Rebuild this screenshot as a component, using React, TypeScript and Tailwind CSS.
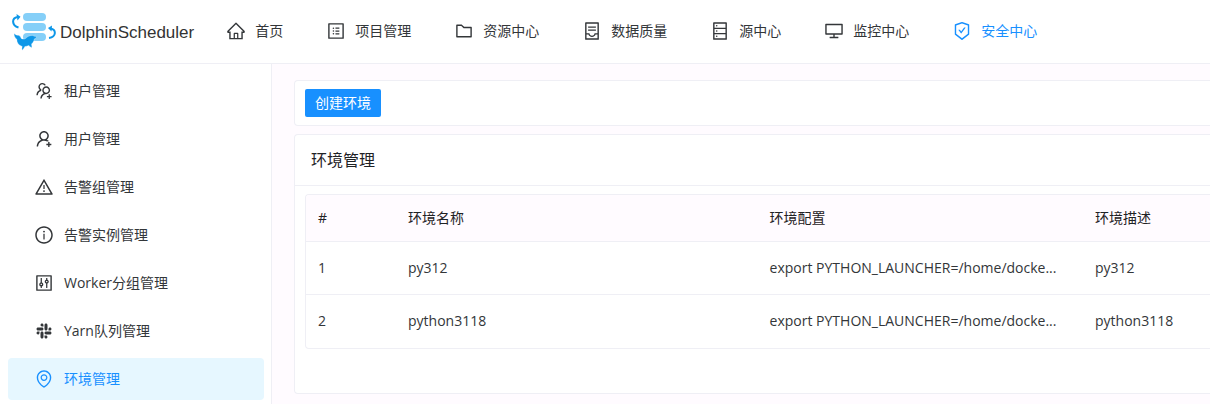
import {
  AiOutlineContainer,
  AiOutlineControl,
  AiOutlineDatabase,
  AiOutlineDesktop,
  AiOutlineEnvironment,
  AiOutlineFolder,
  AiOutlineHome,
  AiOutlineInfoCircle,
  AiOutlineProfile,
  AiOutlineSafetyCertificate,
  AiOutlineSlack,
  AiOutlineUserAdd,
  AiOutlineUsergroupAdd,
  AiOutlineWarning,
} from 'react-icons/ai'

const navItems = [
  { label: '首页', icon: AiOutlineHome },
  { label: '项目管理', icon: AiOutlineProfile },
  { label: '资源中心', icon: AiOutlineFolder },
  { label: '数据质量', icon: AiOutlineContainer },
  { label: '源中心', icon: AiOutlineDatabase },
  { label: '监控中心', icon: AiOutlineDesktop },
  { label: '安全中心', icon: AiOutlineSafetyCertificate, active: true },
]

const sideItems = [
  { label: '租户管理', icon: AiOutlineUsergroupAdd },
  { label: '用户管理', icon: AiOutlineUserAdd },
  { label: '告警组管理', icon: AiOutlineWarning },
  { label: '告警实例管理', icon: AiOutlineInfoCircle },
  { label: 'Worker分组管理', icon: AiOutlineControl },
  { label: 'Yarn队列管理', icon: AiOutlineSlack },
  { label: '环境管理', icon: AiOutlineEnvironment, active: true },
]

const environments = [
  { name: 'py312', config: 'export PYTHON_LAUNCHER=/home/docke...', description: 'py312' },
  { name: 'python3118', config: 'export PYTHON_LAUNCHER=/home/docke...', description: 'python3118' },
]

function Logo() {
  return (
    <a href="#" className="flex items-center gap-1 shrink-0 text-[17px] text-[#333333] font-['Liberation_Sans',sans-serif]">
      <svg className="w-11 h-10" viewBox="0 0 44 40" aria-hidden="true">
        {/* Task bars */}
        <g fill="#85cff8">
          <rect x="11" y="1" width="23" height="8" rx="4" />
          <rect x="11" y="11" width="23" height="8" rx="4" />
          <rect x="11" y="21" width="23" height="8" rx="4" />
        </g>
        {/* Arrows */}
        <g fill="none" stroke="#0d97e8" strokeWidth="2">
          <path d="M6.5 15.5C-0.5 13.5 -0.5 6 5.5 5" />
          <path d="M37 26C44.5 25 44.5 17.5 38.5 16.5" />
        </g>
        <path d="M4.5 2L8.5 4.8L5.5 8.5Z" fill="#0d97e8" />
        <path d="M40 13.5L36 16L39.5 19.5Z" fill="#0d97e8" />
        {/* Dolphin */}
        <path
          d="M2 21.500C3.500 22.800 5 23.300 6.200 23.300C7.500 23.600 8.800 24.500 9 26.200C10.500 27.300 12 27.400 13.500 26.500C15.500 24.500 18 23.300 20.500 23.500C21.200 23.600 21.800 23.900 22 24.200C23.500 24.200 24.600 24.600 24.500 25.300C24.300 26 23 26.400 22.200 27.200C22 29 21 30.800 19.500 32L20 35.500C18.500 35 17.300 34.200 16.800 33.400C15.300 34 13.800 34.400 12.800 34.600C12.300 36 11.300 37.400 10 38.200C9.800 36.800 9.900 35.500 10.200 34.400C6.500 33.300 4.700 30.500 4.800 27.200C3.200 26.200 2 24 2 21.500Z"
          fill="#0d97e8"
          stroke="#ffffff"
          strokeWidth="0.3"
        />
      </svg>
      <span className="pt-1">DolphinScheduler</span>
    </a>
  )
}

export default function App() {
  return (
    <div className="min-h-screen flex flex-col bg-white text-sm text-[#333639] font-['Open_Sans','Noto_Sans_CJK_SC',sans-serif]">
      <header className="flex items-center h-16 pl-3 border-b border-[#efeff5]">
        <Logo />
        <nav className="flex items-center gap-[43px] pl-8 pb-0.5">
          {navItems.map(({ label, icon: Icon, active }) => (
            <a
              key={label}
              href="#"
              className={`flex items-center gap-[9px] whitespace-nowrap ${active ? 'text-[#1890ff]' : ''}`}
            >
              <Icon className="w-5 h-5" />
              <span>{label}</span>
            </a>
          ))}
        </nav>
      </header>

      <div className="flex flex-1">
        <aside className="w-68 shrink-0 pl-2 pr-[7px] pt-1.5 border-r border-[#efeff5]">
          <ul className="flex flex-col gap-1.5">
            {sideItems.map(({ label, icon: Icon, active }) => (
              <li key={label}>
                <a
                  href="#"
                  className={`flex items-center gap-2.5 h-[42px] pl-[26px] rounded-sm ${active ? 'bg-[#e6f7ff] text-[#1890ff]' : ''}`}
                >
                  <Icon className="w-5 h-5" />
                  <span>{label}</span>
                </a>
              </li>
            ))}
          </ul>
        </aside>

        <main className="flex-1 min-w-0 pl-[22px] pt-4 bg-[#fffbff]">
          <section className="p-2 pl-2.5 bg-white border-y border-l border-[#efeff5] rounded-l-sm">
            <button type="button" className="block h-7 px-2.5 bg-[#1890ff] text-white rounded-xs">
              创建环境
            </button>
          </section>

          <section className="mt-2 bg-white border-y border-l border-[#efeff5] rounded-l-sm">
            <h2 className="flex items-center h-[51px] px-4 text-base text-[#1f2225] border-b border-[#efeff5]">
              环境管理
            </h2>
            <div className="pl-2.5 pt-2 pb-11">
              <div className="border-y border-l border-[#efeff5] rounded-l-sm overflow-hidden">
                <table className="w-full table-fixed text-left">
                  <thead className="bg-[#fffbff] text-[#1f2225]">
                    <tr className="h-[46px] border-b border-[#efeff5]">
                      <th className="w-[90px] px-3 font-normal">#</th>
                      <th className="w-[40%] px-3 font-normal">环境名称</th>
                      <th className="w-[36%] px-3 font-normal">环境配置</th>
                      <th className="px-3 font-normal">环境描述</th>
                    </tr>
                  </thead>
                  <tbody>
                    {environments.map((env, index) => (
                      <tr key={env.name} className="h-[53px] border-b border-[#efeff5] last:h-[54px] last:border-b-0">
                        <td className="px-3">{index + 1}</td>
                        <td className="px-3">{env.name}</td>
                        <td className="px-3 whitespace-nowrap">{env.config}</td>
                        <td className="px-3">{env.description}</td>
                      </tr>
                    ))}
                  </tbody>
                </table>
              </div>
            </div>
          </section>
        </main>
      </div>
    </div>
  )
}
